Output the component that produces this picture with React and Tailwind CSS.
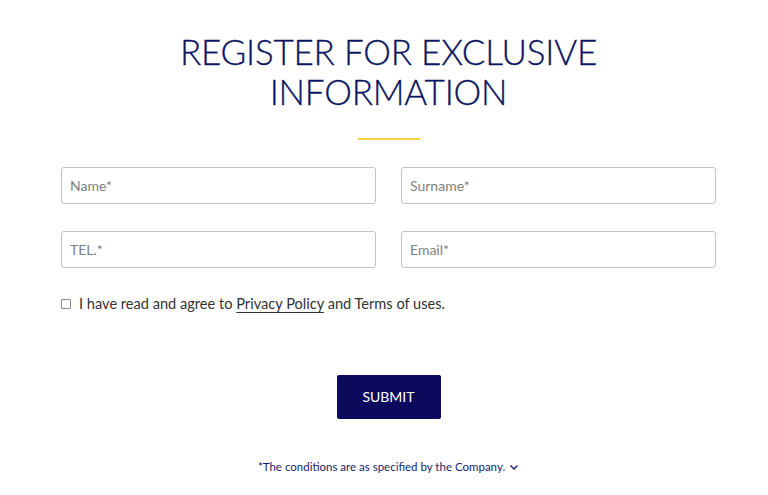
export default function App() {
  return (
    <div className="w-[768px] h-[495px] bg-white pl-[9px] flex flex-col items-center font-['Lato',sans-serif]">
      <h1 className="mt-[31px] text-center text-[35px] leading-[40px] text-[#0c1660] tracking-[-0.2px] font-light [-webkit-text-stroke:0.3px_#0c1660]">
        REGISTER FOR EXCLUSIVE<br />INFORMATION
      </h1>
      <div className="mt-[27px] w-[62px] h-[2px] bg-[#f5cf45]" />
      <div className="mt-[27px] w-[655px] grid grid-cols-2 gap-x-[25px] gap-y-[27px]">
        {["Name*", "Surname*", "TEL.*", "Email*"].map((p) => (
          <div key={p} className="h-[37px] border border-[#c4c4c4] rounded-[3px] flex items-center px-[8px] text-[14px] text-[#808080]">
            {p}
          </div>
        ))}
      </div>
      <div className="mt-[25px] w-[655px] flex items-center text-[14.6px] text-[#333]">
        <span className="w-[10px] h-[10px] border border-[#888] rounded-[1px] mr-[8px]" />
        <span>I have read and agree to <span className="underline underline-offset-[3px]">Privacy Policy</span> and Terms of uses.</span>
      </div>
      <button className="mt-[60px] w-[104px] h-[44px] bg-[#0c0a5c] rounded-[2px] text-white text-[14px]">
        SUBMIT
      </button>
      <div className="mt-[39px] flex items-center text-[11.5px] text-[#1b1b6b]">
        *The conditions are as specified by the Company.
        <svg width="10" height="8" viewBox="0 0 10 8" className="ml-[4px]">
          <path d="M1.5 2.5 L5 6 L8.5 2.5" fill="none" stroke="#1b1b6b" strokeWidth="1.4" />
        </svg>
      </div>
    </div>
  );
}
